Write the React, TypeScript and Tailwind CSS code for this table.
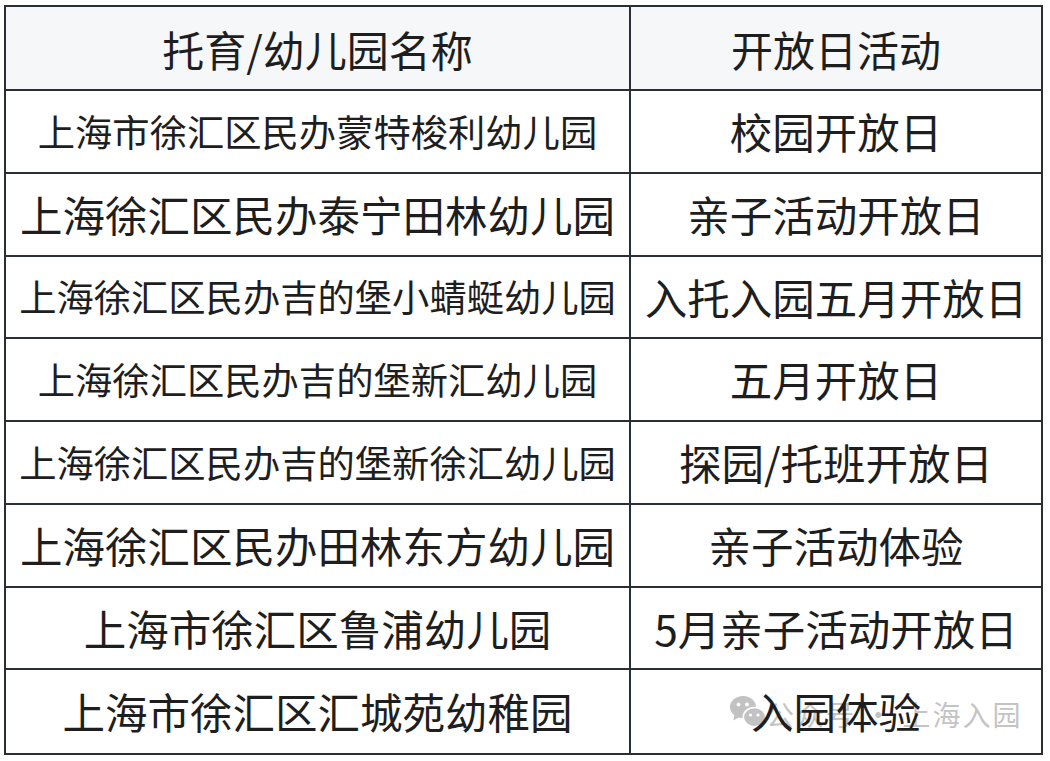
import React from "react";

const rows: { name: string; act: string; small?: boolean }[] = [
  { name: "上海市徐汇区民办蒙特梭利幼儿园", act: "校园开放日", small: true },
  { name: "上海徐汇区民办泰宁田林幼儿园", act: "亲子活动开放日" },
  { name: "上海徐汇区民办吉的堡小蜻蜓幼儿园", act: "入托入园五月开放日", small: true },
  { name: "上海徐汇区民办吉的堡新汇幼儿园", act: "五月开放日", small: true },
  { name: "上海徐汇区民办吉的堡新徐汇幼儿园", act: "探园/托班开放日", small: true },
  { name: "上海徐汇区民办田林东方幼儿园", act: "亲子活动体验" },
  { name: "上海市徐汇区鲁浦幼儿园", act: "5月亲子活动开放日" },
  { name: "上海市徐汇区汇城苑幼稚园", act: "入园体验" },
];

function WeChatIcon() {
  return (
    <svg width="40" height="40" viewBox="0 0 40 40">
      <path
        d="M18 2C10.5 2 5 7 5 13c0 3.3 1.7 6.2 4.4 8.2L8.2 26.5l5.3-3c1.4.4 2.9.6 4.5.6 7.5 0 13-5 13-11S25.5 2 18 2z"
        fill="#c2c2c2"
      />
      <circle cx="13.5" cy="10.5" r="1.9" fill="#fff" />
      <circle cx="22" cy="10.5" r="1.9" fill="#fff" />
      <path
        d="M29.5 13.5c-6.4 0-11.2 4.3-11.2 9.6 0 5.3 4.8 9.6 11.2 9.6 1.3 0 2.6-.2 3.8-.6l4.4 2.6-1-4.3c2.5-1.8 4-4.4 4-7.3 0-5.3-4.8-9.6-11.2-9.6z"
        fill="#c2c2c2"
        stroke="#fff"
        strokeWidth="1.6"
      />
      <circle cx="25.5" cy="21" r="1.6" fill="#fff" />
      <circle cx="33" cy="21" r="1.6" fill="#fff" />
    </svg>
  );
}

export default function App() {
  const font = {
    fontFamily: '"Noto Sans CJK SC", "Noto Sans", sans-serif',
  } as React.CSSProperties;
  return (
    <div className="w-[1050px] h-[761px] bg-white pl-[4px] pt-[5px]" style={font}>
      <div className="w-[1039px] h-[750px] border-2 border-[#2a2e35] grid grid-cols-[625px_1fr] grid-rows-[84px_repeat(8,1fr)] text-[#1e1e1e]">
        <div className="bg-[#f6f7f9] border-r-2 border-b-2 border-[#2a2e35] flex items-center justify-center text-[42px] leading-none pt-[2px]">
          托育/幼儿园名称
        </div>
        <div className="bg-[#f6f7f9] border-b-2 border-[#2a2e35] flex items-center justify-center text-[42px] leading-none pt-[2px]">
          开放日活动
        </div>
        {rows.map((r, i) => {
          const last = i === rows.length - 1;
          return (
            <React.Fragment key={i}>
              <div
                className={`border-r-2 border-[#2a2e35] flex items-center justify-center leading-none whitespace-nowrap ${
                  last ? "" : "border-b-2"
                } ${r.small ? "text-[37.3px]" : "text-[42.5px]"}`}
              >
                {r.name}
              </div>
              <div
                className={`relative border-[#2a2e35] flex items-center justify-center leading-none whitespace-nowrap text-[42.5px] ${
                  last ? "" : "border-b-2"
                }`}
              >
                {last && (
                  <div className="absolute left-[94px] top-[24px] flex items-center text-[28px] leading-none text-[#c4c4c4] tracking-[2px]">
                    <WeChatIcon />
                    <span className="ml-[1px]">公众号 · 上海入园</span>
                  </div>
                )}
                <span className="relative">{r.act}</span>
              </div>
            </React.Fragment>
          );
        })}
      </div>
    </div>
  );
}
